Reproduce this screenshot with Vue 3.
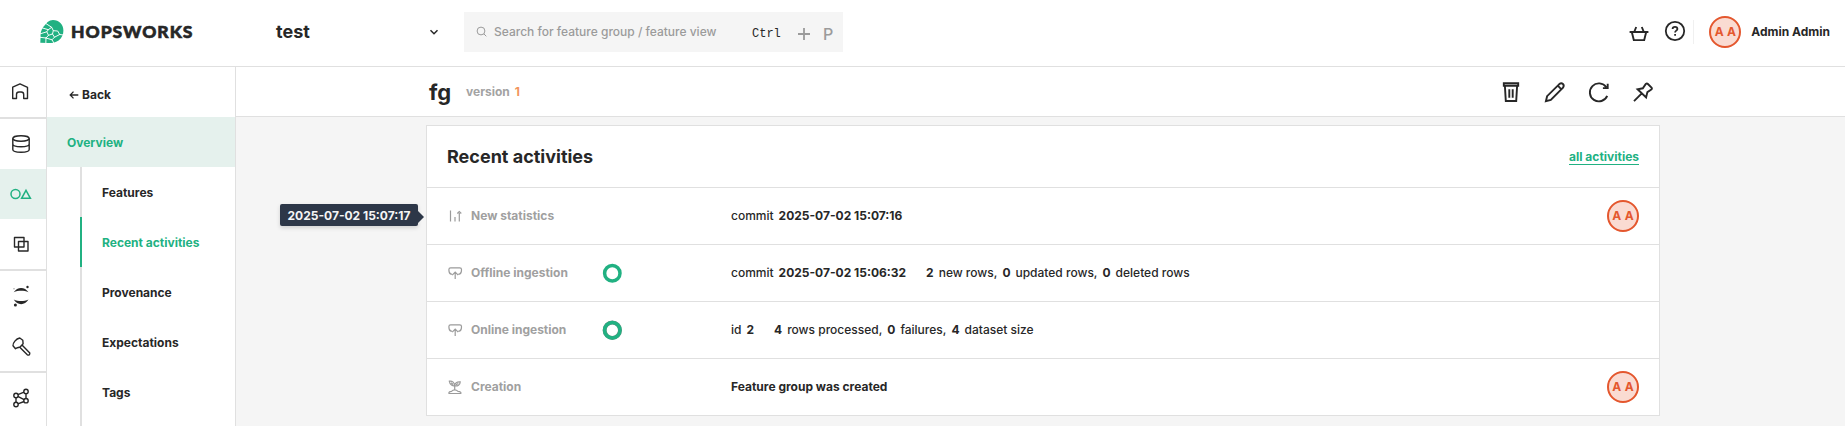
<script setup>
const menu = [
  { label: 'Features' },
  { label: 'Recent activities', active: true },
  { label: 'Provenance' },
  { label: 'Expectations' },
  { label: 'Tags' },
]
const rows = [
  { icon: 'stats', label: 'New statistics', avatar: true, tooltip: '2025-07-02 15:07:17',
    groups: [[['commit', '2025-07-02 15:07:16']]] },
  { icon: 'ingest', label: 'Offline ingestion', ring: 'plain',
    groups: [[['commit', '2025-07-02 15:06:32']], [['', '2', 'new rows,'], ['', '0', 'updated rows,'], ['', '0', 'deleted rows']]] },
  { icon: 'ingest', label: 'Online ingestion', ring: 'edged',
    groups: [[['id', '2']], [['', '4', 'rows processed,'], ['', '0', 'failures,'], ['', '4', 'dataset size']]] },
  { icon: 'plant', label: 'Creation', avatar: true,
    groups: [[['', 'Feature group was created']]] },
]
</script>

<template>
  <div class="app">
    <header class="top">
      <div class="brand">
        <svg class="mark" width="24" height="24" viewBox="0 0 24 24">
          <path d="M.3 22.800.6 17C.2 14 1 10 3.200 7L7.600 2C9.200.7 11.200 0 13 0c6 0 10.400 4.700 10.400 10.400 0 4-1.500 7.600-4.800 10C15.500 22.600 12 23 8 23z" fill="#21b182" />
          <g fill="none" stroke="#fff" stroke-width=".95" stroke-linecap="round" stroke-linejoin="round">
            <path d="M5.500 3.300 11.700 7.300 13.300 10.700 17.700 11 19.700 14.500 23.500 15M11.700 7.300 8.300 9.700 2.500 8M8.300 9.700 6.800 11.800.3 13.800M6.800 11.800 8.500 15.300 12.500 14 13.300 10.700M12.500 14 14.500 17.200 19.700 14.500M8.500 15.300 6 18 0 17.300M6 18 5.800 23.500M14.500 17.200 12 19.800 6 18M12 19.800 14.200 23.500" />
          </g>
        </svg>
        <span class="word">HOPSWORKS</span>
      </div>
      <div class="project">
        <span>test</span>
        <svg width="10" height="8" viewBox="0 0 10 8"><path d="M1.500 2.200 5 5.700l3.500-3.500" fill="none" stroke="#272727" stroke-width="1.500" /></svg>
      </div>
      <div class="search">
        <svg width="12" height="12" viewBox="0 0 12 12" fill="none" stroke="#9b9b9b"><circle cx="5" cy="5" r="3.900" /><path d="m7.900 7.900 2.400 2.400" /></svg>
        <span class="hint">Search for feature group / feature view</span>
        <span class="ctrl">Ctrl</span>
        <svg class="plus" width="14" height="14" viewBox="0 0 14 14"><path d="M7 1v12M1 7h12" stroke="#9b9b9b" stroke-width="1.800" /></svg>
        <span class="key">P</span>
      </div>
      <div class="user">
        <svg class="basket" width="20" height="18" viewBox="0 0 20 18" fill="none" stroke="#272727" stroke-width="1.900"><path d="M.6 7h18.800M2.800 7l2 8.100h10.400l2-8.100M5.200 7l2-5M14.800 7l-2-5" /></svg>
        <svg class="help" width="22" height="22" viewBox="0 0 22 22" fill="none" stroke="#272727" stroke-width="1.800"><circle cx="11" cy="11" r="9.200" /><path d="M8.600 9.100c0-1.500 1-2.300 2.400-2.300s2.400.8 2.400 2.100c0 1.700-2.300 1.700-2.300 3.500" /><path d="M11.100 14.100v1.700" /></svg>
        <i class="rule"></i>
        <span class="avatar">A A</span>
        <b>Admin Admin</b>
      </div>
    </header>
    <div class="body">
      <nav class="rail">
        <div class="cell line">
          <svg viewBox="0 0 46 50"><path d="M12.700 31.500v-11.300L20 16.900l7.500 3.400v11.200h-3.800v-4q0-2.500-2.500-2.500h-2.200q-2.500 0-2.500 2.500v4z" /></svg>
        </div>
        <div class="cell">
          <svg viewBox="0 0 46 50"><ellipse cx="21" cy="19.500" rx="8.200" ry="2.700" /><path d="M12.800 19.500v11c0 1.600 3.700 2.700 8.200 2.700s8.200-1.100 8.200-2.700v-11M12.800 25c0 1.600 3.700 2.700 8.200 2.700s8.200-1.100 8.200-2.700" /></svg>
        </div>
        <div class="cell on">
          <svg viewBox="0 0 46 50"><circle cx="15.500" cy="25" r="4.500" /><path d="M26 21.300 30.400 29.300h-8.800z" /></svg>
        </div>
        <div class="cell line">
          <svg viewBox="0 0 46 50"><path d="M14.500 18.500h9.500v9.500h-9.500zM18.500 22.500h9.500v9.500h-9.500z" /></svg>
        </div>
        <div class="cell">
          <svg viewBox="0 0 46 50"><g class="solid"><path d="M13.700 21.200C17.500 15.500 24.700 15.500 28.500 21.200 24 19.300 18.200 19.300 13.700 21.200zM13.700 28.500C18.200 30.500 24 30.500 28.500 28.500 24.700 34.700 17.500 34.700 13.700 28.500z" /><circle cx="27.500" cy="16" r="1.200" /><circle cx="15.400" cy="33.900" r="1.500" /><circle class="tiny" cx="14" cy="17.800" r=".8" /></g></svg>
        </div>
        <div class="cell line">
          <svg viewBox="0 0 46 50"><path d="M13 24.700c-.3-2.700 3-7 6.800-7.700l3 2.300.3 3.500-3 3.200-2.600.7-2 1zM19.500 25.900 27.300 33.800q2.500 1 2.500-1.700L22 24" /></svg>
        </div>
        <div class="cell">
          <svg viewBox="0 0 46 50"><path d="m17.900 21.700 6.100-2.500M17.800 23.400l6.300 3.200M16 24.500v5M26 20.500v5M24.100 28.500l-6.200 2.400" /><circle cx="16" cy="22.500" r="2.200" /><circle cx="26" cy="18.400" r="2.200" /><circle cx="26" cy="27.700" r="2.200" /><circle cx="16" cy="31.500" r="2.200" /></svg>
        </div>
      </nav>
      <nav class="side">
        <div class="back">
          <svg width="10" height="10" viewBox="0 0 10 10"><path d="M9.300 5H1.200M4.500 1.600 1.200 5l3.300 3.400" fill="none" stroke="#272727" stroke-width="1.300" /></svg>
          <span>Back</span>
        </div>
        <div class="overview">Overview</div>
        <div v-for="m in menu" :key="m.label" class="item" :class="{ active: m.active }">{{ m.label }}</div>
        <div class="item"></div>
      </nav>
      <main>
        <div class="head">
          <h1>fg</h1>
          <span class="ver">version</span><span class="num">1</span>
          <div class="tools">
            <svg viewBox="0 0 24 24"><path d="M4.800 3.300h14.400v2.500H4.800zM5.900 6 6.800 21h10.400l.9-15M10.300 9.300v8.500M13.700 9.300v8.500" /></svg>
            <svg viewBox="0 0 24 24"><path d="m2.900 21.200 1.200-5L16.300 4.100c2.700-2.200 5.700.7 3.700 3.600L7.800 19.900zM14.800 5.700l3.600 3.600" /></svg>
            <svg viewBox="0 0 24 24"><path d="M20.200 15.800A9 9 0 1 1 19.300 7.300M20.700 3.800v4.300h-4.800" /></svg>
            <svg viewBox="0 0 24 24"><path d="M14.800 3.900q1.100-.9 2.100.1l3.600 3.600q.9 1.100-.2 2l-3.900 2.500-1.300 5.300L6.600 9.300l5.200-1zM10.500 13.700 3 21.200" /></svg>
          </div>
        </div>
        <section class="card">
          <div class="title"><h2>Recent activities</h2><a>all activities</a></div>
          <div v-for="r in rows" :key="r.label" class="row">
            <svg v-if="r.icon === 'stats'" class="ic" viewBox="0 0 16 16"><path d="M3.500 2.500v11M8 9v4.500M12.300 5v8.500M10.300 5.500 12.300 3.500l2 2" /></svg>
            <svg v-else-if="r.icon === 'ingest'" class="ic" viewBox="0 0 16 16"><path d="M5 9.200H4Q1.900 8.600 1.900 5V4.500q0-1.700 1.700-1.700h9.200q1.700 0 1.700 1.700V5q0 3.600-2.100 4.200h-1M8.200 14V7.200M5.200 10.200l3-3 3 3" /></svg>
            <svg v-else class="ic" viewBox="0 0 16 16"><path d="M7.700 11.200V6.500M7.700 6.800C6 7.300 2.700 5.600 2.300 2.200 5.400 1.700 7.700 3.700 7.700 6.800c0-2.500 2.200-4.300 5.500-3.900 0 2.900-2.600 4.600-5.500 3.900M4 3.700l2.300 1.700M9 5.700l2.300-1.300M2 14.500h11.800v-1.200q-1-1-2.800-1-1.500-1.500-3.300-1.500T4.500 12.300q-1.700 0-2.500 1z" /></svg>
            <span class="label">{{ r.label }}</span>
            <span class="state">
              <svg v-if="r.ring" width="20" height="20" viewBox="0 0 20 20" fill="none">
                <circle v-if="r.ring === 'edged'" cx="10.300" cy="10.200" r="7.700" stroke="#7a8a82" stroke-width="4" />
                <circle cx="10.300" cy="10.200" r="7.700" stroke="#21b182" stroke-width="3.500" />
              </svg>
            </span>
            <div class="info">
              <div v-for="(g, gi) in r.groups" :key="gi" class="group">
                <span v-for="(p, pi) in g" :key="pi" class="pair">
                  <span v-if="p[0]">{{ p[0] }}</span><b>{{ p[1] }}</b><span v-if="p[2]">{{ p[2] }}</span>
                </span>
              </div>
            </div>
            <span v-if="r.avatar" class="avatar">A A</span>
            <span v-if="r.tooltip" class="tip">{{ r.tooltip }}</span>
          </div>
        </section>
      </main>
    </div>
  </div>
</template>

<style>
body { overflow: hidden; }
</style>
<style scoped>
* { box-sizing: border-box; }
.app { width: 1845px; height: 426px; overflow: hidden; display: flex; flex-direction: column; font: 500 12px/16px Inter, sans-serif; color: #272727; background: #fff; }
svg { flex: none; display: block; }
b { font-weight: 700; }
.top { height: 67px; flex: none; border-bottom: 1px solid #e0e0e0; display: flex; align-items: center; padding: 0 15px 2px 40px; }
.brand { display: flex; align-items: center; width: 236px; gap: 7px; }
.word { font: 900 17.500px/24px Lato, sans-serif; letter-spacing: .95px; white-space: nowrap; -webkit-text-stroke: .6px #272727; }
.project { display: flex; align-items: center; justify-content: space-between; width: 163px; font-size: 18px; font-weight: 700; line-height: 24px; }
.search { margin-left: 25px; width: 379px; height: 40px; background: #f5f5f5; display: flex; align-items: center; padding-left: 12px; color: #9b9b9b; }
.hint { margin-left: 6px; width: 258px; white-space: nowrap; }
.ctrl { font: 12px/16px "Liberation Mono", monospace; color: #272727; width: 45px; padding-top: 3px; }
.plus { margin: 4px 12px 0 0; }
.key { font-size: 16px; padding-top: 4px; }
.user { margin-left: auto; display: flex; align-items: center; }
.basket { margin: 4px 15px 0 0; }
.help { margin: -2px 7px 0 0; }
.rule { width: 1px; height: 24px; background: #f0f0f0; margin-right: 15px; }
.user b { margin-left: 10px; white-space: nowrap; }
.avatar { width: 32px; height: 32px; border-radius: 50%; border: 2px solid #e4572e; background: #fadbd2; color: #e4572e; font-weight: 700; line-height: 28px; text-align: center; flex: none; white-space: nowrap; word-spacing: .5px; }
.body { flex: 1; display: flex; min-height: 0; }
.rail { width: 47px; border-right: 1px solid #e0e0e0; flex: none; overflow: hidden; }
.cell { height: 50px; }
.cell.line { height: 52px; border-bottom: 2px solid #e0e0e0; }
.cell svg { width: 46px; height: 50px; fill: none; stroke: #272727; stroke-width: 1.400; stroke-linejoin: round; }
.cell .solid { fill: #272727; stroke: none; }
.solid .tiny { fill: #aaa; }
.cell.on { background: #e5f1ed; }
.cell.on svg { stroke: #21b182; stroke-width: 1.500; stroke-linejoin: miter; }
.side { width: 189px; border-right: 1px solid #e0e0e0; flex: none; font-weight: 700; overflow: hidden; }
.back { height: 50px; display: flex; align-items: center; padding: 6px 0 0 22px; gap: 3px; }
.overview { height: 50px; line-height: 52px; padding-left: 20px; background: #e5f1ed; color: #21b182; }
.item { height: 50px; line-height: 51px; margin-left: 33px; padding-left: 20px; border-left: 2px solid #e0e0e0; }
.item.active { color: #21b182; border-color: #21b182; }
main { flex: 1; background: #f5f5f5; }
.head { height: 50px; background: #fff; border-bottom: 1px solid #e0e0e0; display: flex; align-items: center; padding-left: 193px; }
h1 { margin: 0; font-size: 22px; font-weight: 700; line-height: 28px; width: 37px; }
.ver { font-weight: 700; color: #a3a3a3; }
.num { margin-left: 5px; font-weight: 700; color: #f2955a; }
.tools { margin: 0 190px 0 auto; display: flex; gap: 20px; }
.tools svg { width: 24px; height: 24px; fill: none; stroke: #272727; stroke-width: 1.900; }
.card { margin: 8px 0 0 190px; width: 1234px; border: 1px solid #e0e0e0; background: #fff; }
.title { height: 61px; padding: 0 20px; display: flex; align-items: center; justify-content: space-between; }
h2 { margin: 0; font-size: 18px; font-weight: 700; line-height: 24px; }
.title a { margin-top: 2px; color: #21b182; font-weight: 700; line-height: 14px; border-bottom: 1px solid #21b182; }
.row { height: 57px; border-top: 1px solid #e0e0e0; padding: 0 20px; display: flex; align-items: center; position: relative; }
.ic { width: 16px; height: 16px; fill: none; stroke: #9b9b9b; stroke-width: 1.200; }
.label { margin-left: 8px; width: 131px; color: #a0a0a0; font-weight: 700; }
.state { width: 129px; }
.info { flex: 1; display: flex; gap: 20px; white-space: nowrap; }
.group, .pair { display: flex; gap: 5px; }
.tip { position: absolute; right: 1241px; top: 16px; height: 22px; width: 138px; line-height: 23px; text-align: center; border-radius: 2px; background: #2d3748; color: #f5f5f5; font-weight: 700; white-space: nowrap; box-shadow: 0 2px 4px rgba(0, 0, 0, .15); }
.tip::after { content: ""; position: absolute; left: 138px; top: 7px; border: solid transparent; border-width: 6px 0 6px 6px; border-left-color: #2d3748; }
</style>
